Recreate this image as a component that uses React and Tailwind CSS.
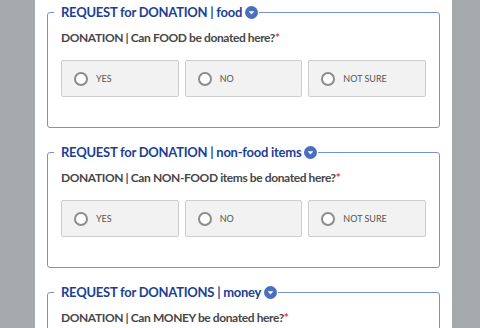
import React from "react";

const sections = [
  { title: "REQUEST for DONATION | food", question: "DONATION | Can FOOD be donated here?" },
  { title: "REQUEST for DONATION | non-food items", question: "DONATION | Can NON-FOOD items be donated here?" },
  { title: "REQUEST for DONATIONS | money", question: "DONATION | Can MONEY be donated here?" },
];

const options = ["YES", "NO", "NOT SURE"];

const Chevron = () => (
  <svg width="13" height="13" viewBox="0 0 13 13" className="inline-block ml-[3px] -mt-[2px] align-middle">
    <circle cx="6.5" cy="6.5" r="6.5" fill="#4a6fbd" />
    <path d="M3.6 5.2 L9.4 5.2 L6.5 8.4 Z" fill="#ffffff" />
  </svg>
);

const Option = ({ label }) => (
  <div className="flex-1 h-[37px] flex items-center bg-[#f2f2f2] border border-[#cdcdcd] rounded-[2px] pl-[12px]">
    <span className="w-[14px] h-[14px] rounded-full border-2 border-[#8c8c8c] bg-white" />
    <span className="ml-[8px] text-[9px] text-[#555]">{label}</span>
  </div>
);

const Section = ({ title, question }) => (
  <fieldset className="border-[1.5px] border-[#7393d6] rounded-[3px] pl-[6px] pr-[13px] pb-[30px] mb-[16px]">
    <legend className="pl-[7px] pr-[1px] text-[13px] leading-[16px] font-bold text-[#1c3f95] tracking-[-0.25px]">
      {title}
      <Chevron />
    </legend>
    <div className="pl-[7px]">
      <div className="mt-[10px] text-[12px] leading-[16px] font-bold text-[#474747] tracking-[-0.4px]">
        {question}
        <span className="text-[#d9432f]">*</span>
      </div>
      <div className="mt-[14px] flex gap-[6px]">
        {options.map((o) => (
          <Option key={o} label={o} />
        ))}
      </div>
    </div>
  </fieldset>
);

const App = () => (
  <div className="w-[480px] h-[328px] overflow-hidden bg-[#a5a9ac]" style={{ fontFamily: "Lato, 'Noto Sans', sans-serif" }}>
    <div className="ml-[35px] w-[417px] h-full bg-white px-[12px] pt-[4px]">
      {sections.map((s) => (
        <Section key={s.title} {...s} />
      ))}
    </div>
  </div>
);

export default App;
